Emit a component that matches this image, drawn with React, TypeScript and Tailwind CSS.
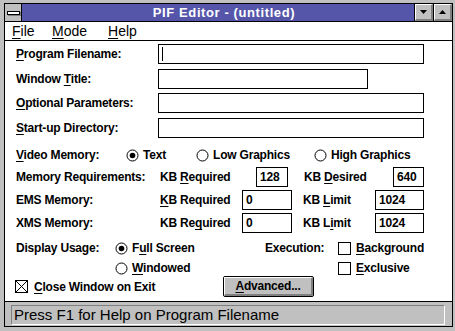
import React from "react";

const U = ({ children }: { children: React.ReactNode }) => <span className="underline underline-offset-2">{children}</span>;

function Radio({ on }: { on?: boolean }) {
  return (
    <svg width="13" height="13" viewBox="0 0 13 13" className="shrink-0">
      <circle cx="6.5" cy="6.5" r="5.5" fill="white" stroke="black" />
      {on && <circle cx="6.5" cy="6.5" r="2.8" fill="black" />}
    </svg>
  );
}

function Check({ on }: { on?: boolean }) {
  return (
    <div className="w-[13px] h-[13px] shrink-0 border border-black bg-white">
      {on && (
        <svg width="11" height="11" viewBox="0 0 11 11">
          <path d="M0 0L11 11M11 0L0 11" stroke="black" strokeWidth="1" />
        </svg>
      )}
    </div>
  );
}

function Field({ w, value, caret }: { w: string; value?: string; caret?: boolean }) {
  return (
    <div className={`${w} h-[20px] shrink-0 border border-black bg-white flex items-center pl-[3px] relative`}>
      {caret && <div className="w-[1px] h-[14px] bg-black" />}
      {value}
    </div>
  );
}

function TitleButton({ up }: { up?: boolean }) {
  return (
    <div className="w-[18px] h-full bg-[#c0c0c0] border-t border-l border-white border-b-2 border-r-2 border-b-[#808080] border-r-[#808080] flex items-center justify-center">
      <svg width="7" height="4" viewBox="0 0 7 4">
        {up ? <path d="M3.5 0L7 4H0Z" fill="black" /> : <path d="M0 0H7L3.5 4Z" fill="black" />}
      </svg>
    </div>
  );
}

export default function App() {
  return (
    <div className="w-[455px] h-[331px] bg-[#c0c0c0] pt-[3px] pl-[4px] pr-[2px] pb-[4px] flex font-['Liberation_Sans',Arial,sans-serif] text-black">
      <div className="flex-1 flex flex-col border border-black">
        {/* title bar */}
        <div className="h-[18px] flex border-b border-black">
          <div className="w-[17px] bg-[#c0c0c0] border-r border-black flex items-center justify-center">
            <div className="w-[13px] h-[4px] bg-white border border-black shadow-[1px_1px_0_#808080]" />
          </div>
          <div className="flex-1 bg-[#5555aa] flex items-center justify-center text-white font-bold text-[13px] tracking-[0.6px] pl-[12px]">
            PIF Editor - (untitled)
          </div>
          <div className="flex border-l border-black">
            <TitleButton />
            <div className="w-[1px] bg-black" />
            <TitleButton up />
          </div>
        </div>
        {/* menu */}
        <div className="h-[19px] bg-white border-b border-black flex items-center text-[14px] font-medium pl-[7px]">
          <span className="w-[40px]"><U>F</U>ile</span>
          <span className="w-[56px]"><U>M</U>ode</span>
          <span><U>H</U>elp</span>
        </div>
        {/* client */}
        <div className="flex-1 bg-white border-b border-black pl-[11px] pt-[3px] flex flex-col text-[12px] font-bold tracking-[-0.2px]">
          <div className="flex items-center h-[20px]">
            <span className="w-[142px]"><U>P</U>rogram Filename:</span>
            <Field w="w-[266px]" caret />
          </div>
          <div className="flex items-center h-[20px] mt-[5px]">
            <span className="w-[142px]">Window <U>T</U>itle:</span>
            <Field w="w-[210px]" />
          </div>
          <div className="flex items-center h-[20px] mt-[4px]">
            <span className="w-[142px]"><U>O</U>ptional Parameters:</span>
            <Field w="w-[266px]" />
          </div>
          <div className="flex items-center h-[20px] mt-[5px]">
            <span className="w-[142px]"><U>S</U>tart-up Directory:</span>
            <Field w="w-[266px]" />
          </div>

          <div className="flex items-center h-[16px] mt-[9px]">
            <span className="w-[110px]"><U>V</U>ideo Memory:</span>
            <div className="w-[70px] flex items-center gap-[4px]"><Radio on /><span>Text</span></div>
            <div className="w-[118px] flex items-center gap-[4px]"><Radio /><span>Low Graphics</span></div>
            <div className="flex items-center gap-[4px]"><Radio /><span>High Graphics</span></div>
          </div>

          <div className="flex items-center h-[20px] mt-[4px]">
            <span className="w-[144px]">Memory Requirements:</span>
            <span className="w-[96px]">KB <U>R</U>equired</span>
            <Field w="w-[32px]" value="128" />
            <span className="w-[89px] ml-[16px]">KB <U>D</U>esired</span>
            <Field w="w-[31px]" value="640" />
          </div>
          <div className="flex items-center h-[20px] mt-[3px]">
            <span className="w-[144px]">EMS Memory:</span>
            <span className="w-[82px]"><U>K</U>B Required</span>
            <Field w="w-[50px]" value="0" />
            <span className="w-[72px] ml-[11px]">KB <U>L</U>imit</span>
            <Field w="w-[49px]" value="1024" />
          </div>
          <div className="flex items-center h-[20px] mt-[3px]">
            <span className="w-[144px]">XMS Memory:</span>
            <span className="w-[82px]">KB Re<U>q</U>uired</span>
            <Field w="w-[50px]" value="0" />
            <span className="w-[72px] ml-[11px]">KB L<U>i</U>mit</span>
            <Field w="w-[49px]" value="1024" />
          </div>

          <div className="flex items-center h-[20px] mt-[5px]">
            <span className="w-[99px]">Display Usage:</span>
            <div className="w-[150px] flex items-center gap-[4px]"><Radio on /><span>F<U>u</U>ll Screen</span></div>
            <span className="w-[73px]">Execution:</span>
            <div className="flex items-center gap-[5px]"><Check /><span><U>B</U>ackground</span></div>
          </div>
          <div className="flex items-center h-[20px]">
            <span className="w-[99px]" />
            <div className="w-[150px] flex items-center gap-[4px]"><Radio /><span><U>W</U>indowed</span></div>
            <span className="w-[73px]" />
            <div className="flex items-center gap-[5px]"><Check /><span><U>E</U>xclusive</span></div>
          </div>
          <div className="flex items-center h-[21px] -mt-[2px]">
            <div className="w-[208px] -ml-[1px] flex items-center gap-[6px]"><Check on /><span><U>C</U>lose Window on Exit</span></div>
            <div className="w-[91px] h-[21px] border border-black rounded-[2px] bg-[#c0c0c0] flex">
              <div className="flex-1 border-t border-l border-white border-b-2 border-r-2 border-b-[#808080] border-r-[#808080] flex items-center justify-center">
                <span><U>A</U>dvanced...</span>
              </div>
            </div>
          </div>
        </div>
        {/* status */}
        <div className="h-[24px] bg-[#c0c0c0] pl-[6px] pr-[7px] pt-[3px] pb-[1px] flex">
          <div className="flex-1 border-t border-l border-[#808080] border-b border-r border-b-white border-r-white flex items-center pl-[2px] text-[15px]">
            Press F1 for Help on Program Filename
          </div>
        </div>
      </div>
    </div>
  );
}
